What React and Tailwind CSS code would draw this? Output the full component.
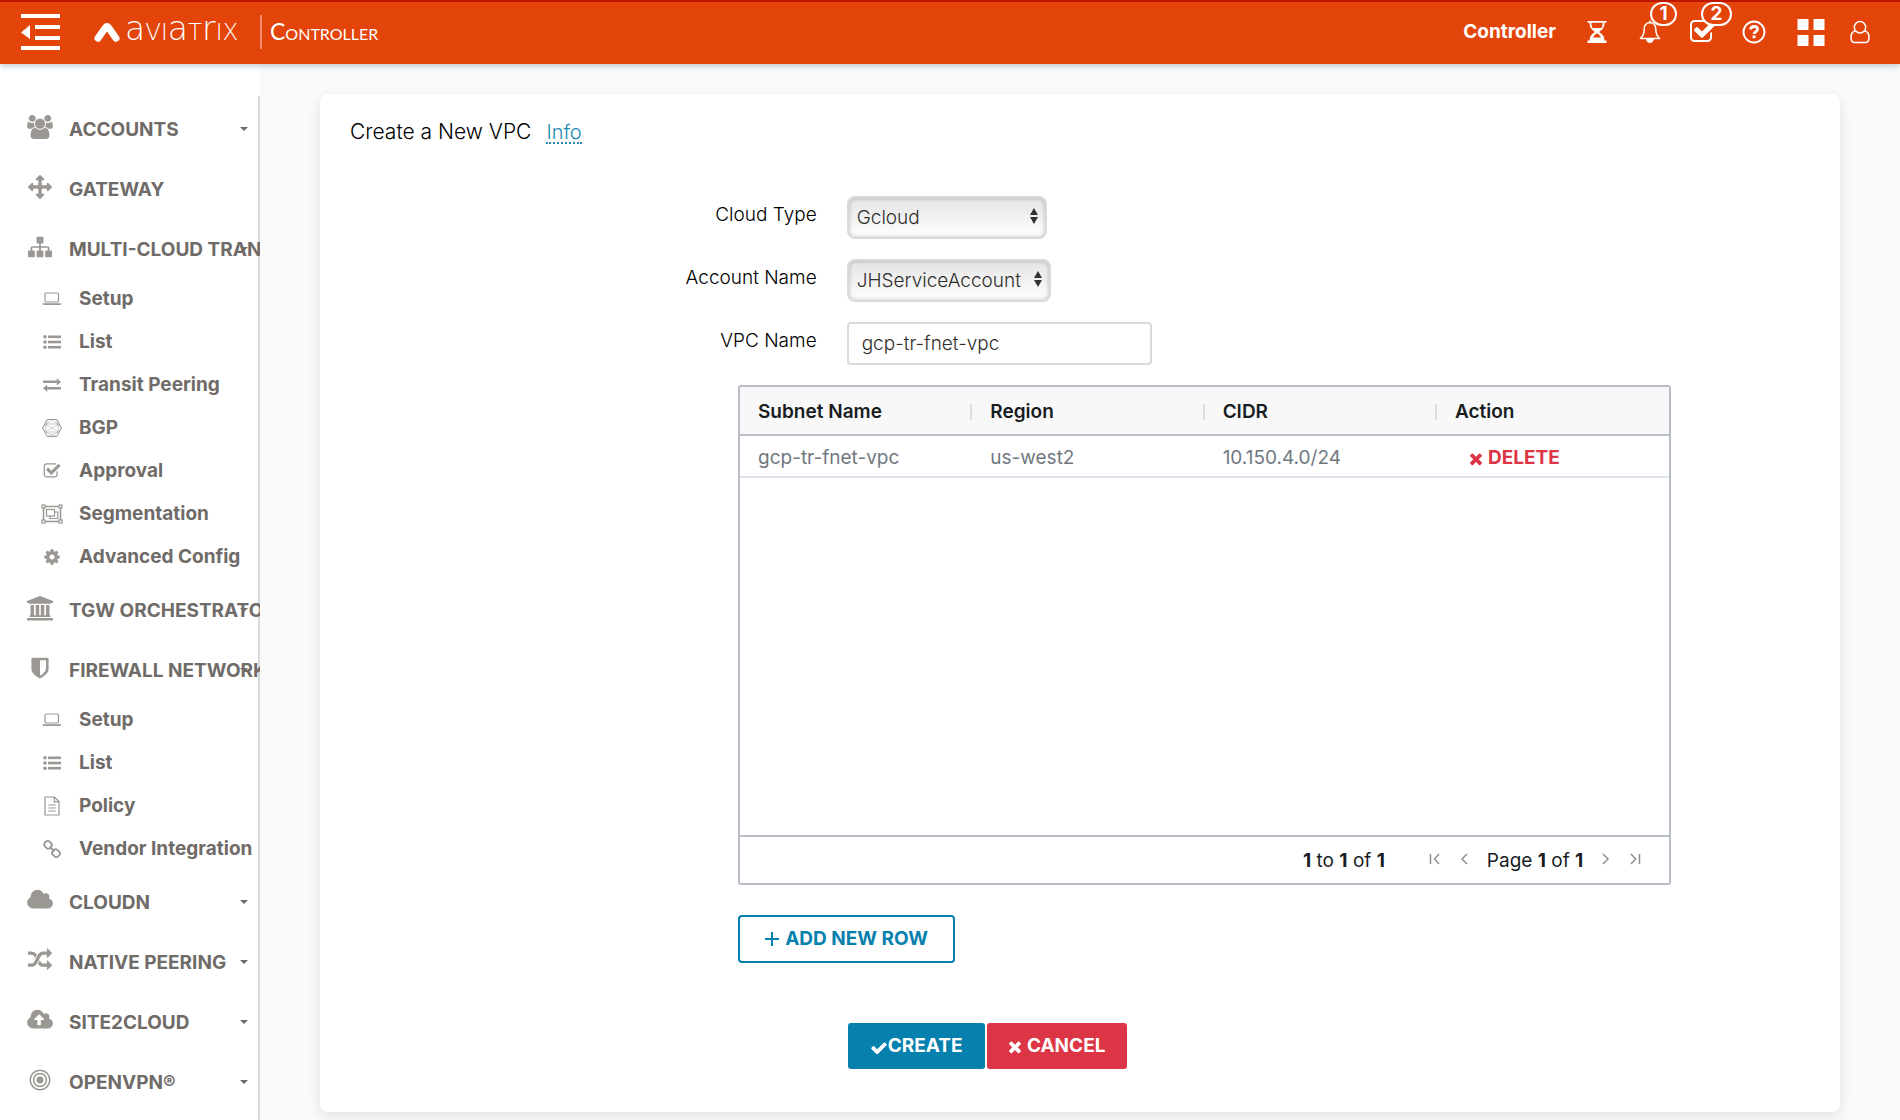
import { useState } from 'react';

// sidebar and toolbar glyphs, drawn on a 1792 grid unless noted
const PATHS = {
  users: {
    box: '0 0 1920 1792',
    d: 'M593 896q-162 5-265 128h-134q-82 0-138-40.5t-56-118.5q0-353 124-353 6 0 43.5 21t97.5 42.5 119 21.5q67 0 133-23-5 37-5 66 0 139 81 256zm1071 637q0 120-73 189.5t-194 69.5h-874q-121 0-194-69.5t-73-189.5q0-53 3.5-103.5t14-109 26.5-108.5 43-97.5 62-81 85.5-53.5 111.5-20q10 0 43 21.5t73 48 107 48 135 21.5 135-21.5 107-48 73-48 43-21.5q61 0 111.5 20t85.5 53.5 62 81 43 97.5 26.5 108.5 14 109 3.5 103.5zm-1024-1277q0 106-75 181t-181 75-181-75-75-181 75-181 181-75 181 75 75 181zm704 384q0 159-112.5 271.5t-271.5 112.5-271.5-112.5-112.5-271.5 112.5-271.5 271.5-112.5 271.5 112.5 112.5 271.5zm576 225q0 78-56 118.5t-138 40.5h-134q-103-123-265-128 81-117 81-256 0-29-5-66 66 23 133 23 59 0 119-21.5t97.5-42.5 43.5-21q124 0 124 353zm-128-609q0 106-75 181t-181 75-181-75-75-181 75-181 181-75 181 75 75 181z',
  },
  arrows: {
    box: '0 0 1792 1792',
    d: 'M1792 896q0 26-19 45l-256 256q-19 19-45 19t-45-19-19-45v-128h-384v384h128q26 0 45 19t19 45-19 45l-256 256q-19 19-45 19t-45-19l-256-256q-19-19-19-45t19-45 45-19h128v-384h-384v128q0 26-19 45t-45 19-45-19l-256-256q-19-19-19-45t19-45l256-256q19-19 45-19t45 19 19 45v128h384v-384h-128q-26 0-45-19t-19-45 19-45l256-256q19-19 45-19t45 19l256 256q19 19 19 45t-19 45-45 19h-128v384h384v-128q0-26 19-45t45-19 45 19l256 256q19 19 19 45z',
  },
  sitemap: {
    box: '0 0 1792 1792',
    d: 'M1792 1248v320q0 40-28 68t-68 28h-320q-40 0-68-28t-28-68v-320q0-40 28-68t68-28h96v-192h-512v192h96q40 0 68 28t28 68v320q0 40-28 68t-68 28h-320q-40 0-68-28t-28-68v-320q0-40 28-68t68-28h96v-192h-512v192h96q40 0 68 28t28 68v320q0 40-28 68t-68 28h-320q-40 0-68-28t-28-68v-320q0-40 28-68t68-28h96v-192q0-52 38-90t90-38h512v-192h-96q-40 0-68-28t-28-68v-320q0-40 28-68t68-28h320q40 0 68 28t28 68v320q0 40-28 68t-68 28h-96v192h512q52 0 90 38t38 90v192h96q40 0 68 28t28 68z',
  },
  shield: {
    box: '0 0 1792 1792',
    d: 'M1344 960v-640h-448v1137q119-63 213-137 235-184 235-360zm192-768v768q0 86-33.5 170.5t-83 150-118 127.5-126.5 103-121 77.5-89.5 49.5-42.5 20q-12 6-26 6t-26-6q-16-7-42.5-20t-89.5-49.5-121-77.5-126.5-103-118-127.5-83-150-33.5-170.5v-768q0-26 19-45t45-19h1152q26 0 45 19t19 45z',
  },
  cloud: {
    box: '64 0 1920 1792',
    d: 'M1984 1152q0 159-112.5 271.5t-271.5 112.5h-1088q-185 0-316.5-131.5t-131.5-316.5q0-132 71-241.5t187-163.5q-2-28-2-43 0-212 150-362t362-150q158 0 286.5 88t187.5 230q70-62 166-62 106 0 181 75t75 181q0 75-41 138 129 30 213 134.5t84 239.5z',
  },
  cloudUpload: {
    box: '64 0 1920 1792',
    d: 'M1344 864q0-14-9-23l-352-352q-9-9-23-9t-23 9l-351 351q-10 12-10 24 0 14 9 23t23 9h224v352q0 13 9.5 22.5t22.5 9.5h192q13 0 22.5-9.5t9.5-22.5v-352h224q13 0 22.5-9.5t9.5-22.5zm640 288q0 159-112.5 271.5t-271.5 112.5h-1088q-185 0-316.5-131.5t-131.5-316.5q0-130 70-240t188-165q-2-30-2-43 0-212 150-362t362-150q156 0 285.5 87t188.5 231q71-62 166-62 106 0 181 75t75 181q0 76-41 138 130 31 213.5 135.5t83.5 238.5z',
  },
  random: {
    box: '0 0 1792 1792',
    d: 'M666 481q-60 92-137 273-22-45-37-72.5t-40.5-63.5-51-56.5-63-35-81.5-14.5h-224q-14 0-23-9t-9-23v-192q0-14 9-23t23-9h224q250 0 410 225zm1126 799q0 14-9 23l-320 320q-9 9-23 9-13 0-22.5-9.5t-9.5-22.5v-192q-32 0-85 .5t-81 1-73-1-71-5-64-10.5-63-18.5-58-28.5-59-40-55-53.5-56-69.5q59-93 136-273 22 45 37 72.5t40.5 63.5 51 56.5 63 35 81.5 14.5h256v-192q0-14 9-23t23-9q12 0 24 10l319 319q9 9 9 23zm0-896q0 14-9 23l-320 320q-9 9-23 9-13 0-22.5-9.5t-9.5-22.5v-192h-256q-48 0-87 15t-69 45-51 61.5-45 77.5q-32 62-78 171-29 66-49.5 111t-54 105-64 100-74 83-90 68.5-106.5 42-128 16.5h-224q-14 0-23-9t-9-23v-192q0-14 9-23t23-9h224q48 0 87-15t69-45 51-61.5 45-77.5q32-62 78-171 29-66 49.5-111t54-105 64-100 74-83 90-68.5 106.5-42 128-16.5h256v-192q0-14 9-23t23-9q12 0 24 10l319 319q9 9 9 23z',
  },
  cog: {
    box: '0 0 1792 1792',
    d: 'M1152 896q0-106-75-181t-181-75-181 75-75 181 75 181 181 75 181-75 75-181zm512-109v222q0 12-8 23t-20 13l-185 28q-19 54-39 91 35 50 107 138 10 12 10 25t-9 23q-27 37-99 108t-94 71q-12 0-26-9l-138-108q-44 23-91 38-16 136-29 186-7 28-36 28h-222q-14 0-24.5-8.5t-11.5-21.5l-28-184q-49-16-90-37l-141 107q-10 9-25 9-14 0-25-11-126-114-165-168-7-10-7-23 0-12 8-23 15-21 51-66.5t54-70.5q-27-50-41-99l-183-27q-13-2-21-12.5t-8-23.5v-222q0-12 8-23t19-13l186-28q14-46 39-92-40-57-107-138-10-12-10-24 0-10 9-23 26-36 98.5-107.5t94.5-71.5q13 0 26 10l138 107q44-23 91-38 16-136 29-186 7-28 36-28h222q14 0 24.5 8.5t11.5 21.5l28 184q49 16 90 37l142-107q9-9 24-9 13 0 25 10 129 119 165 170 7 8 7 22 0 12-8 23-15 21-51 66.5t-54 70.5q26 50 41 98l183 28q13 2 21 12.5t8 23.5z',
  },
  checkSquare: {
    box: '0 0 1792 1792',
    d: 'M1472 930v318q0 119-84.5 203.5t-203.5 84.5h-832q-119 0-203.5-84.5t-84.5-203.5v-832q0-119 84.5-203.5t203.5-84.5h832q63 0 117 25 15 7 18 23 3 17-9 29l-49 49q-10 10-23 10-3 0-9-2-23-6-45-6h-832q-66 0-113 47t-47 113v832q0 66 47 113t113 47h832q66 0 113-47t47-113v-254q0-13 9-22l64-64q10-10 23-10 6 0 12 3 20 8 20 29zm231-489l-814 814q-24 24-57 24t-57-24l-430-430q-24-24-24-57t24-57l110-110q24-24 57-24t57 24l263 263 647-647q24-24 57-24t57 24l110 110q24 24 24 57t-24 57z',
  },
  check: {
    box: '0 0 1792 1792',
    d: 'M1671 566q0 40-28 68l-724 724-136 136q-28 28-68 28t-68-28l-136-136-362-362q-28-28-28-68t28-68l136-136q28-28 68-28t68 28l294 295 656-657q28-28 68-28t68 28l136 136q28 28 28 68z',
  },
  times: {
    box: '192 320 1408 1408',
    d: 'M1490 1322q0 40-28 68l-136 136q-28 28-68 28t-68-28l-294-294-294 294q-28 28-68 28t-68-28l-136-136q-28-28-28-68t28-68l294-294-294-294q-28-28-28-68t28-68l136-136q28-28 68-28t68 28l294 294 294-294q28-28 68-28t68 28l136 136q28 28 28 68t-28 68l-294 294 294 294q28 28 28 68z',
  },
};

const Glyph = ({ name, className }) => (
  <svg viewBox={PATHS[name].box} fill="currentColor" className={className} aria-hidden="true">
    <path d={PATHS[name].d} />
  </svg>
);

const LaptopIcon = () => (
  <svg viewBox="0 0 20 14" className="w-5 h-[14px]" fill="none" stroke="currentColor" aria-hidden="true">
    <rect x="3" y="1" width="13.5" height="9" rx="1.2" strokeWidth="1.2" />
    <path d="M.5 11.2h18.8v.6q0 1.2-1.6 1.2H2q-1.5 0-1.5-1.2z" fill="currentColor" stroke="none" />
  </svg>
);

const ListIcon = () => (
  <svg viewBox="0 0 20 16" className="w-5 h-4" fill="currentColor" aria-hidden="true">
    <circle cx="3" cy="2.8" r="1.8" />
    <circle cx="3" cy="8" r="1.8" />
    <circle cx="3" cy="13.2" r="1.8" />
    <rect x="6" y="1.5" width="13" height="2.6" />
    <rect x="6" y="6.7" width="13" height="2.6" />
    <rect x="6" y="11.9" width="13" height="2.6" />
  </svg>
);

const ExchangeIcon = () => (
  <svg viewBox="0 0 20 16" className="w-5 h-4" fill="currentColor" aria-hidden="true">
    <path d="M1 3.6h13.8V1.2L19 4.9l-4.2 3.7V6H1z" />
    <path d="M19 10H5.2V7.6L1 11.3l4.2 3.7v-2.6H19z" />
  </svg>
);

const BgpIcon = () => (
  <svg viewBox="0 0 22 20" className="w-[22px] h-5" fill="none" stroke="currentColor" aria-hidden="true">
    <path d="M6.2 1.5h9.6L20.5 10l-4.7 8.5H6.2L1.5 10z" strokeWidth="1" />
    <path
      d="M6.2 1.5L4 14l12 4.5M15.8 1.5L18 14 6 18.5M1.5 10L11 1.5 20.5 10M4 6l14 8M18 6L4 14M4 6h14M4 14h14"
      strokeWidth="0.6"
      opacity="0.8"
    />
  </svg>
);

const SegmentIcon = () => (
  <svg viewBox="0 0 22 20" className="w-[22px] h-5" fill="none" stroke="currentColor" strokeWidth="1.2" aria-hidden="true">
    <path d="M4 2.5h14M4 17.5h14M2.5 4v12M19.5 4v12" strokeWidth="1.5" />
    <rect x="1" y="1" width="3" height="3" />
    <rect x="18" y="1" width="3" height="3" />
    <rect x="1" y="16" width="3" height="3" />
    <rect x="18" y="16" width="3" height="3" />
    <rect x="5.5" y="5.5" width="8" height="6.5" />
    <path d="M13.5 8h3.3v6.5H9V12" />
  </svg>
);

const FileIcon = () => (
  <svg viewBox="0 0 16 20" className="w-4 h-5" fill="none" stroke="currentColor" strokeWidth="1.2" aria-hidden="true">
    <path d="M1 1h9.5L15 5.5V19H1zM10.3 1v4.8H15M4.2 9h7.6M4.2 12h7.6M4.2 15h7.6" />
  </svg>
);

const LinkIcon = () => (
  <svg viewBox="0 0 18 18" className="w-[18px] h-[18px]" fill="none" stroke="currentColor" strokeWidth="1.8" aria-hidden="true">
    <rect x="1.3" y="1.5" width="7.4" height="6.6" rx="2.6" transform="rotate(45 5 4.8)" />
    <rect x="9.3" y="9.9" width="7.4" height="6.6" rx="2.6" transform="rotate(45 13 13.2)" />
    <path d="M6.5 6.5l5 5" />
  </svg>
);

const BankIcon = () => (
  <svg viewBox="0 0 26 25" className="w-[26px] h-[25px]" fill="currentColor" aria-hidden="true">
    <path d="M13 0l13 5v2h-1.5q0 .8-.9.8H2.4q-.9 0-.9-.8H0V5z" />
    <path d="M3.5 9H7v10.2h1.7V9h3.5v10.2h1.6V9h3.5v10.2H19V9h3.5v10.2q1 0 1 .9v.8h-21v-.8q0-.9 1-.9z" />
    <rect y="22" width="26" height="2.6" rx=".6" />
  </svg>
);

const TargetIcon = () => (
  <svg viewBox="0 0 22 22" className="w-[22px] h-[22px]" fill="none" stroke="currentColor" strokeWidth="1.5" aria-hidden="true">
    <circle cx="11" cy="11" r="9.8" />
    <circle cx="11" cy="11" r="6.5" />
    <circle cx="11" cy="11" r="3.4" fill="currentColor" stroke="none" />
  </svg>
);

const MENU = [
  { label: 'ACCOUNTS', icon: <Glyph name="users" className="w-[26px] h-6" />, caret: true },
  { label: 'GATEWAY', icon: <Glyph name="arrows" className="w-6 h-6" /> },
  {
    label: 'MULTI-CLOUD TRANSIT',
    icon: <Glyph name="sitemap" className="w-6 h-6" />,
    caret: true,
    items: [
      { label: 'Setup', icon: <LaptopIcon /> },
      { label: 'List', icon: <ListIcon /> },
      { label: 'Transit Peering', icon: <ExchangeIcon /> },
      { label: 'BGP', icon: <BgpIcon /> },
      { label: 'Approval', icon: <Glyph name="checkSquare" className="w-[18px] h-[18px]" /> },
      { label: 'Segmentation', icon: <SegmentIcon /> },
      { label: 'Advanced Config', icon: <Glyph name="cog" className="w-[18px] h-[18px]" /> },
    ],
  },
  { label: 'TGW ORCHESTRATOR', icon: <BankIcon />, caret: true },
  {
    label: 'FIREWALL NETWORK',
    icon: <Glyph name="shield" className="w-6 h-6" />,
    caret: true,
    items: [
      { label: 'Setup', icon: <LaptopIcon /> },
      { label: 'List', icon: <ListIcon /> },
      { label: 'Policy', icon: <FileIcon /> },
      { label: 'Vendor Integration', icon: <LinkIcon /> },
    ],
  },
  { label: 'CLOUDN', icon: <Glyph name="cloud" className="w-[26px] h-6" />, caret: true },
  { label: 'NATIVE PEERING', icon: <Glyph name="random" className="w-6 h-6" />, caret: true },
  { label: 'SITE2CLOUD', icon: <Glyph name="cloudUpload" className="w-[26px] h-6" />, caret: true },
  { label: 'OPENVPN®', icon: <TargetIcon />, caret: true },
];

const COLUMNS = ['Subnet Name', 'Region', 'CIDR', 'Action'];

const Header = () => (
  <header className="relative z-10 h-16 shrink-0 flex items-center pb-[2px] bg-[#e3440a] border-t-2 border-[#bf1600] text-white shadow-[0_2px_6px_rgba(100,130,150,0.4)]">
    <button type="button" aria-label="Toggle menu" className="ml-5">
      <svg viewBox="0 0 40 38" className="w-10 h-[38px]" fill="currentColor" aria-hidden="true">
        <path d="M1 1h39v4H1zM15 12h25v4H15zM15 23h25v4H15zM1 33h39v4H1zM10 12v14L1 19.5z" />
      </svg>
    </button>
    <a href="#home" className="flex items-center ml-[34px]">
      <svg viewBox="0 0 26 20" className="w-[26px] h-5" fill="none" aria-hidden="true">
        <path d="M4 16.2L11.5 5.500q1.500-2 3 0L22 16.2" stroke="currentColor" strokeWidth="7" strokeLinecap="round" strokeLinejoin="round" />
      </svg>
      {/* wordmark: every letter sits at x-height */}
      <span className="ml-[5px] w-[121px] pb-[6px] font-['DejaVu_Sans'] font-extralight text-[33px] leading-8 whitespace-nowrap">
        a<span className="[font-variant:small-caps]">vi</span>a<span className="[font-variant:small-caps]">t</span>r<span className="[font-variant:small-caps]">ix</span>
      </span>
      <span className="ml-[14px] w-[2px] h-[34px] bg-white/40" />
      <span className="ml-2 pb-[2px] font-['Lato'] text-[23px] leading-8 [font-variant:small-caps]">Controller</span>
    </a>

    <div className="ml-auto mr-[30px] flex items-center">
      <span className="font-bold text-[19px]">Controller</span>
      <button type="button" aria-label="Tasks" className="ml-[31px]">
        <svg viewBox="0 0 20 24" className="w-5 h-6" fill="currentColor" aria-hidden="true">
          <path d="M.5 1h19v1.700H.5zM.5 20.500h19V23H.5z" />
          <path d="M2.500 2.500q0 6.500 5.500 9.500-5.500 3-5.500 9h15q0-6-5.500-9 5.500-3 5.500-9h-1.800q0 2.800-1.200 5h-9Q4.300 5.300 4.300 2.500zM10 13.200q2.800 1.200 4.200 4.300H5.800q1.400-3.100 4.200-4.300z" fillRule="evenodd" />
        </svg>
      </button>
      <button type="button" aria-label="Notifications, 1 new" className="relative ml-8">
        <svg viewBox="0 0 22 24" className="w-[22px] h-6" fill="none" stroke="currentColor" strokeWidth="1.5" aria-hidden="true">
          <path d="M11 2.500q5.800.7 5.800 6.500 0 6.500 3.800 9.500H1.400Q5.200 15.500 5.200 9q0-5.800 5.800-6.500z" strokeLinejoin="round" />
          <path d="M11 2.500V1" strokeLinecap="round" />
          <path d="M8 19.500q.8 2.700 3 2.700t3-2.700z" fill="currentColor" />
        </svg>
        <span className="absolute left-[11px] -top-[18px] w-[27px] h-6 rounded-full border-2 border-white bg-[#e3440a] font-bold text-[19px] leading-5">1</span>
      </button>
      <button type="button" aria-label="Approvals, 2 pending" className="relative ml-7">
        <Glyph name="checkSquare" className="w-[28px] h-[28px]" />
        <span className="absolute left-3 -top-4 w-[31px] h-6 rounded-full border-2 border-white bg-[#e3440a] font-bold text-[19px] leading-5">2</span>
      </button>
      <button type="button" aria-label="Help" className="ml-[25px]">
        <svg viewBox="0 0 24 24" className="w-6 h-6" fill="none" stroke="currentColor" aria-hidden="true">
          <circle cx="12" cy="12" r="10.5" strokeWidth="1.9" />
          <path d="M8.500 9.300q.7-2.800 3.600-2.800 3.400 0 3.400 2.700 0 1.500-1.700 2.500-1.700.9-1.700 2.300" strokeWidth="2.9" />
          <path d="M10.600 15.400h3v2.800h-3z" fill="currentColor" stroke="none" />
        </svg>
      </button>
      <button type="button" aria-label="Apps" className="ml-[31px]">
        <svg viewBox="0 0 28 28" className="w-7 h-7" fill="currentColor" aria-hidden="true">
          <path d="M.5 1h11v11H.5zM16.500 1h11v11h-11zM.5 17h11v11H.5zM16.500 17h11v11h-11z" />
        </svg>
      </button>
      <button type="button" aria-label="Profile" className="ml-[25px]">
        <svg viewBox="0 0 20 24" className="w-5 h-6" fill="none" stroke="currentColor" strokeWidth="1.5" aria-hidden="true">
          <circle cx="10" cy="7.3" r="5.7" />
          <path d="M5.500 11q-4.500.6-4.500 6.500Q1 22.500 4.500 22.500h11q3.500 0 3.500-5 0-5.900-4.500-6.500" />
        </svg>
      </button>
    </div>
  </header>
);

const Sidebar = () => (
  <nav aria-label="Main" className="w-[260px] shrink-0 pt-8 bg-white text-[#6f6b68] font-bold text-[19px]">
    <ul className="h-full pt-[3px] shadow-[inset_-2px_0_0_#d9d9dc]">
      {MENU.map((group) => (
        <li key={group.label}>
          <a href="#menu" className="relative flex items-center h-15 overflow-hidden whitespace-nowrap">
            <span className="w-[26px] ml-[27px] pb-1 flex justify-center shrink-0 text-[#9b9793]">{group.icon}</span>
            <span className="ml-4 pt-[2px]">{group.label}</span>
            {group.caret && (
              <span className="absolute right-3 top-7 border-x-4 border-t-4 border-x-transparent border-t-current" />
            )}
          </a>
          {group.items && (
            <ul>
              {group.items.map((item) => (
                <li key={item.label}>
                  <a href="#page" className="flex items-center h-[43px] pb-1 overflow-hidden whitespace-nowrap">
                    <span className="w-6 ml-10 flex justify-center shrink-0 text-[#9b9793]">{item.icon}</span>
                    <span className="ml-[15px] pt-[2px]">{item.label}</span>
                  </a>
                </li>
              ))}
            </ul>
          )}
        </li>
      ))}
    </ul>
  </nav>
);

const Field = ({ id, label, children }) => (
  <div className="grid grid-cols-3 items-center">
    <label htmlFor={id} className="pr-[10px] pb-[6px] text-right text-[19px] leading-7 font-light text-black">{label}</label>
    <div className="col-span-2 pl-5">{children}</div>
  </div>
);

const SelectBox = ({ id, options, className }) => (
  <div className={`relative h-[43px] ${className}`}>
    <select
      id={id}
      className="w-full h-full pt-[2px] pl-2 pr-6 appearance-none rounded-lg border-2 border-[#dadada] bg-linear-to-b from-[#e4e4e4] to-white shadow-[inset_0_0_4px_rgba(0,0,0,0.25)] text-[19px] font-light text-[#2f2e2a]"
    >
      {options.map((o) => <option key={o}>{o}</option>)}
    </select>
    <svg viewBox="0 0 8 16" className="absolute right-[9px] top-3 w-2 h-4 pointer-events-none" fill="#333" aria-hidden="true">
      <path d="M4 0l4 7H0zM4 16l4-7H0z" />
    </svg>
  </div>
);

const PageButton = ({ label, d }) => (
  <button type="button" aria-label={label} className="pb-1 text-[#8d9094]">
    <svg viewBox="0 0 12 12" className="w-3 h-3" fill="none" stroke="currentColor" strokeWidth="1.5" aria-hidden="true">
      <path d={d} />
    </svg>
  </button>
);

const SubnetTable = ({ rows, onDelete }) => (
  <div className="ml-[27.5%] mr-[11.1%] h-[500px] flex flex-col rounded-[3px] border-2 border-[#babfc7] font-['Inter',sans-serif]">
    <table className="w-full table-fixed text-left text-[19px] leading-7">
      <thead>
        <tr className="h-12 bg-[#f8f8f8] border-b-2 border-[#babfc7] text-[#181d1f]">
          {COLUMNS.map((col, i) => (
            <th key={col} className="p-0 pt-[2px] font-semibold">
              <div className="flex items-center justify-between">
                <span className="pl-[18px]">{col}</span>
                {i < 3 && <span className="w-[2px] h-4 bg-[#dcdde0]" />}
              </div>
            </th>
          ))}
        </tr>
      </thead>
      <tbody>
        {rows.map((row) => (
          <tr key={row.name} className="h-[42px] border-b-2 border-[#dde2eb] text-[#70787f]">
            <td className="pt-1 pb-0 pl-[18px]">{row.name}</td>
            <td className="pt-1 pb-0 pl-[18px]">{row.region}</td>
            <td className="pt-1 pb-0 pl-[18px]">{row.cidr}</td>
            <td className="pt-1 pb-0 pl-8">
              <button
                type="button"
                onClick={() => onDelete(row.name)}
                className="flex items-center gap-[5px] font-bold text-[#dc3545]"
              >
                <Glyph name="times" className="w-[14px] h-[14px] mt-1" />
                DELETE
              </button>
            </td>
          </tr>
        ))}
      </tbody>
    </table>
    <div className="mt-auto h-12 flex items-center justify-end pt-[2px] pr-7 border-t-2 border-[#babfc7] text-[19px] text-[#181d1f]">
      <span><b>1</b> to <b>1</b> of <b>1</b></span>
      <div className="ml-11 flex items-center gap-[17px]">
        <PageButton label="First page" d="M1.500 1v10M10 1L5.500 6l4.500 5" />
        <PageButton label="Previous page" d="M9 1L4 6l5 5" />
        <span>Page <b>1</b> of <b>1</b></span>
        <PageButton label="Next page" d="M3 1l5 5-5 5" />
        <PageButton label="Last page" d="M10.500 1v10M2 1l4.500 5L2 11" />
      </div>
    </div>
  </div>
);

const App = () => {
  const [vpcName, setVpcName] = useState('gcp-tr-fnet-vpc');
  const [rows, setRows] = useState([
    { name: 'gcp-tr-fnet-vpc', region: 'us-west2', cidr: '10.150.4.0/24' },
  ]);

  const handleAdd = () => {
    setRows((prev) => [...prev, { name: `subnet-${prev.length + 1}`, region: '', cidr: '' }]);
  };

  const handleDelete = (name) => {
    setRows((prev) => prev.filter((r) => r.name !== name));
  };

  return (
    <div className="h-screen flex flex-col overflow-hidden bg-[#fafafa] font-['Inter',sans-serif]">
      <Header />
      <div className="flex flex-1 min-h-0">
        <Sidebar />

        <main className="flex-1 min-w-0 pt-[30px] pb-2 px-15">
          <section className="h-full rounded-lg bg-white shadow-[0_4px_14px_rgba(0,0,0,0.1)]">
            <h1 className="pt-6 px-[30px] text-[21px] leading-7 font-light text-black">
              Create a New VPC
              <a href="#info" className="ml-[15px] text-[20px] leading-5 text-[#2389b5] border-b-2 border-dotted inline-block">Info</a>
            </h1>

            <form onSubmit={(e) => e.preventDefault()} className="mt-[50px]">
              <div className="flex flex-col gap-5">
                <Field id="cloud-type" label="Cloud Type">
                  <SelectBox id="cloud-type" options={['Gcloud', 'AWS', 'Azure']} className="w-[200px]" />
                </Field>
                <Field id="account-name" label="Account Name">
                  <SelectBox id="account-name" options={['JHServiceAccount']} className="w-[204px]" />
                </Field>
                <Field id="vpc-name" label="VPC Name">
                  <input
                    id="vpc-name"
                    value={vpcName}
                    onChange={(e) => setVpcName(e.target.value)}
                    className="block w-[305px] h-[43px] px-[13px] rounded border-2 border-[#dadada] bg-white text-[19px] font-light text-[#2f2e2a]"
                  />
                </Field>
              </div>

              <div className="mt-5">
                <SubnetTable rows={rows} onDelete={handleDelete} />
              </div>

              <div className="ml-[27.5%] mt-[30px]">
                <button
                  type="button"
                  onClick={handleAdd}
                  className="flex items-center justify-center gap-[6px] w-[217px] h-12 rounded border-2 border-[#0680ad] text-[19px] font-bold text-[#0680ad]"
                >
                  <svg viewBox="0 0 14 14" className="w-[14px] h-[14px]" fill="none" stroke="currentColor" strokeWidth="2" aria-hidden="true">
                    <path d="M7 0v14M0 7h14" />
                  </svg>
                  ADD NEW ROW
                </button>
              </div>

              <div className="grid grid-cols-3 mt-15">
                <div className="col-start-2 col-span-2 pl-[21px] flex gap-[2px] text-[19px] font-bold text-white">
                  <button type="submit" className="flex items-center justify-center w-[137px] h-[46px] rounded-[3px] bg-[#0680ad]">
                    <Glyph name="check" className="w-[18px] h-[18px] mt-1" />
                    CREATE
                  </button>
                  <button type="button" className="flex items-center justify-center gap-[5px] w-[140px] h-[46px] rounded-[3px] bg-[#dc3545]">
                    <Glyph name="times" className="w-[14px] h-[14px] mt-1" />
                    CANCEL
                  </button>
                </div>
              </div>
            </form>
          </section>
        </main>
      </div>
    </div>
  );
};

export default App;
